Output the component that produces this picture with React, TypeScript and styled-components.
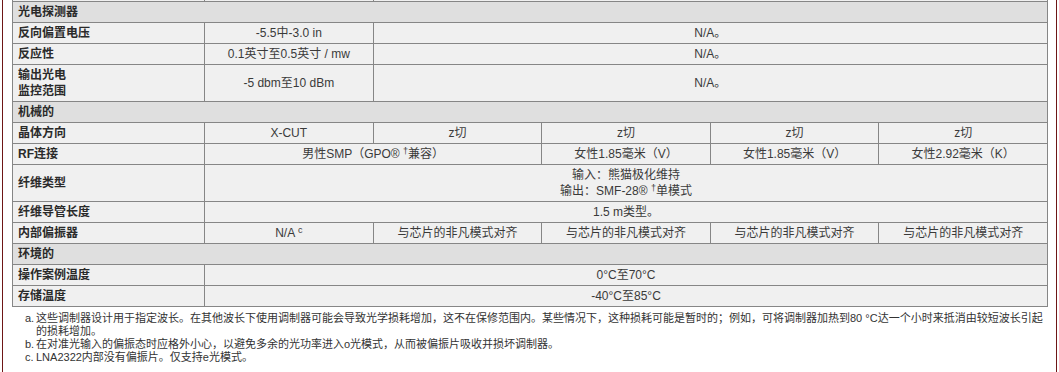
import React from "react";
import styled, { createGlobalStyle } from "styled-components";

const GlobalStyle = createGlobalStyle`
  html, body {
    margin: 0;
    padding: 0;
    background: #ffffff;
  }
  body {
    font-family: "Liberation Sans", "Noto Sans CJK SC", sans-serif;
    color: #333333;
  }
`;

const Page = styled.div`
  box-sizing: border-box;
  width: 1055px;
  min-height: 372px;
  margin-left: 2px;
  padding: 0 8px 0 9px;
  border-left: 1px solid #6e1616;
  border-right: 1px solid #6e1616;
  overflow: hidden;
`;

const SpecTable = styled.table`
  width: 100%;
  margin-top: -20px;
  border-collapse: collapse;
  table-layout: fixed;
  font-size: 12px;
  line-height: 16px;
`;

const LabelCol = styled.col`
  width: 192px;
`;

const Cell = styled.td`
  border: 1px solid #868686;
  padding: 2px 5px;
  background: #f0f0f0;
  color: #3a3a3a;
  text-align: center;
  vertical-align: middle;
  white-space: nowrap;
`;

const LabelCell = styled(Cell)`
  text-align: left;
  font-weight: bold;
  color: #2a2a2a;
`;

const SectionCell = styled.th`
  border: 1px solid #868686;
  padding: 2px 5px;
  background: #dfdfdf;
  color: #2a2a2a;
  text-align: left;
  font-weight: bold;
`;

const Sup = styled.sup`
  font-size: 9px;
  line-height: 0;
  vertical-align: 4px;
`;

const Notes = styled.ol`
  list-style: none;
  margin: 5px 0 0;
  padding: 0 0 0 13px;
  font-size: 11px;
  line-height: 13px;
  color: #333333;
`;

const Note = styled.li`
  display: flex;
`;

const Marker = styled.span`
  flex: 0 0 11px;
`;

const NoteText = styled.span`
  flex: 1;
`;

type CellData = { content: React.ReactNode; span?: number };
type RowData = { label: React.ReactNode; cells: CellData[] };
type Section = { title?: string; rows: RowData[] };

const sections: Section[] = [
  {
    rows: [{ label: "\u00a0", cells: [{ content: "\u00a0" }, { content: "\u00a0", span: 4 }] }],
  },
  {
    title: "光电探测器",
    rows: [
      { label: "反向偏置电压", cells: [{ content: "-5.5中-3.0 in" }, { content: "N/A。", span: 4 }] },
      { label: "反应性", cells: [{ content: "0.1英寸至0.5英寸 / mw" }, { content: "N/A。", span: 4 }] },
      {
        label: (
          <>
            输出光电
            <br />
            监控范围
          </>
        ),
        cells: [{ content: "-5 dbm至10 dBm" }, { content: "N/A。", span: 4 }],
      },
    ],
  },
  {
    title: "机械的",
    rows: [
      {
        label: "晶体方向",
        cells: [
          { content: "X-CUT" },
          { content: "z切" },
          { content: "z切" },
          { content: "z切" },
          { content: "z切" },
        ],
      },
      {
        label: "RF连接",
        cells: [
          {
            content: (
              <>
                男性SMP（GPO® <Sup>†</Sup>兼容）
              </>
            ),
            span: 2,
          },
          { content: "女性1.85毫米（V）" },
          { content: "女性1.85毫米（V）" },
          { content: "女性2.92毫米（K）" },
        ],
      },
      {
        label: "纤维类型",
        cells: [
          {
            content: (
              <>
                输入：熊猫极化维持
                <br />
                输出：SMF-28® <Sup>†</Sup>单模式
              </>
            ),
            span: 5,
          },
        ],
      },
      { label: "纤维导管长度", cells: [{ content: "1.5 m类型。", span: 5 }] },
      {
        label: "内部偏振器",
        cells: [
          {
            content: (
              <>
                N/A <Sup>c</Sup>
              </>
            ),
          },
          { content: "与芯片的非凡模式对齐" },
          { content: "与芯片的非凡模式对齐" },
          { content: "与芯片的非凡模式对齐" },
          { content: "与芯片的非凡模式对齐" },
        ],
      },
    ],
  },
  {
    title: "环境的",
    rows: [
      { label: "操作案例温度", cells: [{ content: "0°C至70°C", span: 5 }] },
      { label: "存储温度", cells: [{ content: "-40°C至85°C", span: 5 }] },
    ],
  },
];

const notes: { mark: string; text: string }[] = [
  {
    mark: "a.",
    text:
      "这些调制器设计用于指定波长。在其他波长下使用调制器可能会导致光学损耗增加，这不在保修范围内。某些情况下，这种损耗可能是暂时的；例如，可将调制器加热到80 °C达一个小时来抵消由较短波长引起的损耗增加。",
  },
  {
    mark: "b.",
    text: "在对准光输入的偏振态时应格外小心，以避免多余的光功率进入o光模式，从而被偏振片吸收并损坏调制器。",
  },
  { mark: "c.", text: "LNA2322内部没有偏振片。仅支持e光模式。" },
];

export default function App() {
  return (
    <>
      <GlobalStyle />
      <Page>
        <SpecTable>
          <colgroup>
            <LabelCol />
            <col />
            <col />
            <col />
            <col />
            <col />
          </colgroup>
          <tbody>
            {sections.map((section, si) => (
              <React.Fragment key={si}>
                {section.title && (
                  <tr>
                    <SectionCell colSpan={6}>{section.title}</SectionCell>
                  </tr>
                )}
                {section.rows.map((row, ri) => (
                  <tr key={ri}>
                    <LabelCell>{row.label}</LabelCell>
                    {row.cells.map((cell, ci) => (
                      <Cell key={ci} colSpan={cell.span ?? 1}>
                        {cell.content}
                      </Cell>
                    ))}
                  </tr>
                ))}
              </React.Fragment>
            ))}
          </tbody>
        </SpecTable>
        <Notes>
          {notes.map((n) => (
            <Note key={n.mark}>
              <Marker>{n.mark}</Marker>
              <NoteText>{n.text}</NoteText>
            </Note>
          ))}
        </Notes>
      </Page>
    </>
  );
}
